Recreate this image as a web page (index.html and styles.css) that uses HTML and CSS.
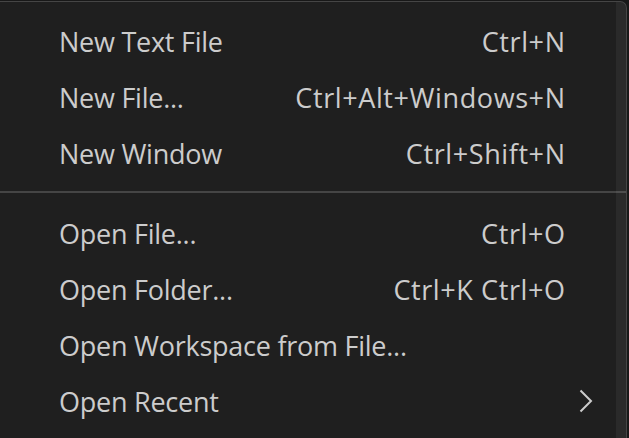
FILE: index.html
```html
<!DOCTYPE html>
<html>
<head>
<meta charset="utf-8">
<link rel="stylesheet" href="styles.css">
</head>
<body>
<div class="menu">
  <div class="group">
    <div class="item"><span class="label">New Text File</span><span class="key">Ctrl+N</span></div>
    <div class="item"><span class="label">New File...</span><span class="key">Ctrl+Alt+Windows+N</span></div>
    <div class="item"><span class="label">New Window</span><span class="key">Ctrl+Shift+N</span></div>
  </div>
  <div class="separator"></div>
  <div class="group">
    <div class="item"><span class="label">Open File...</span><span class="key">Ctrl+O</span></div>
    <div class="item"><span class="label">Open Folder...</span><span class="key">Ctrl+K Ctrl+O</span></div>
    <div class="item"><span class="label">Open Workspace from File...</span><span class="key"></span></div>
    <div class="item"><span class="label">Open Recent</span><span class="key"></span>
      <svg class="chevron" width="14" height="24" viewBox="0 0 14 24"><path d="M1.5 1.5 L12 12 L1.5 22.5" fill="none" stroke="#cccccc" stroke-width="2"/></svg>
    </div>
  </div>
  <div class="scrollbar"></div>
</div>
</body>
</html>
```
FILE: styles.css
```css
html, body {
  margin: 0;
  padding: 0;
  background: #181818;
  width: 629px;
  height: 438px;
  overflow: hidden;
}
.menu {
  position: relative;
  margin-top: 1px;
  margin-left: -20px;
  width: 647px;
  height: 437px;
  overflow: hidden;
  background: #1f1f1f;
  border-top: 1px solid #454545;
  border-right: 1px solid #454545;
  border-top-right-radius: 7px;
  box-sizing: border-box;
  padding-top: 11px;
  font-family: "Open Sans", "Noto Sans", sans-serif;
  font-size: 27px;
  color: #cccccc;
}
.item {
  display: flex;
  align-items: center;
  height: 56px;
  padding-left: 79px;
  padding-right: 61px;
}
.label {
  flex: 1;
  white-space: nowrap;
  letter-spacing: -0.25px;
}
.key {
  white-space: nowrap;
  letter-spacing: 0.6px;
  margin-right: -0.6px;
}
.chevron {
  position: absolute;
  right: 33px;
}
.separator {
  height: 2px;
  background: #454545;
  margin: 10px 0 12px 0;
}
.scrollbar {
  position: absolute;
  top: 0;
  bottom: 0;
  left: 636px;
  width: 12px;
  background: rgba(255, 255, 255, 0.05);
  border-top-right-radius: 7px;
}
```
